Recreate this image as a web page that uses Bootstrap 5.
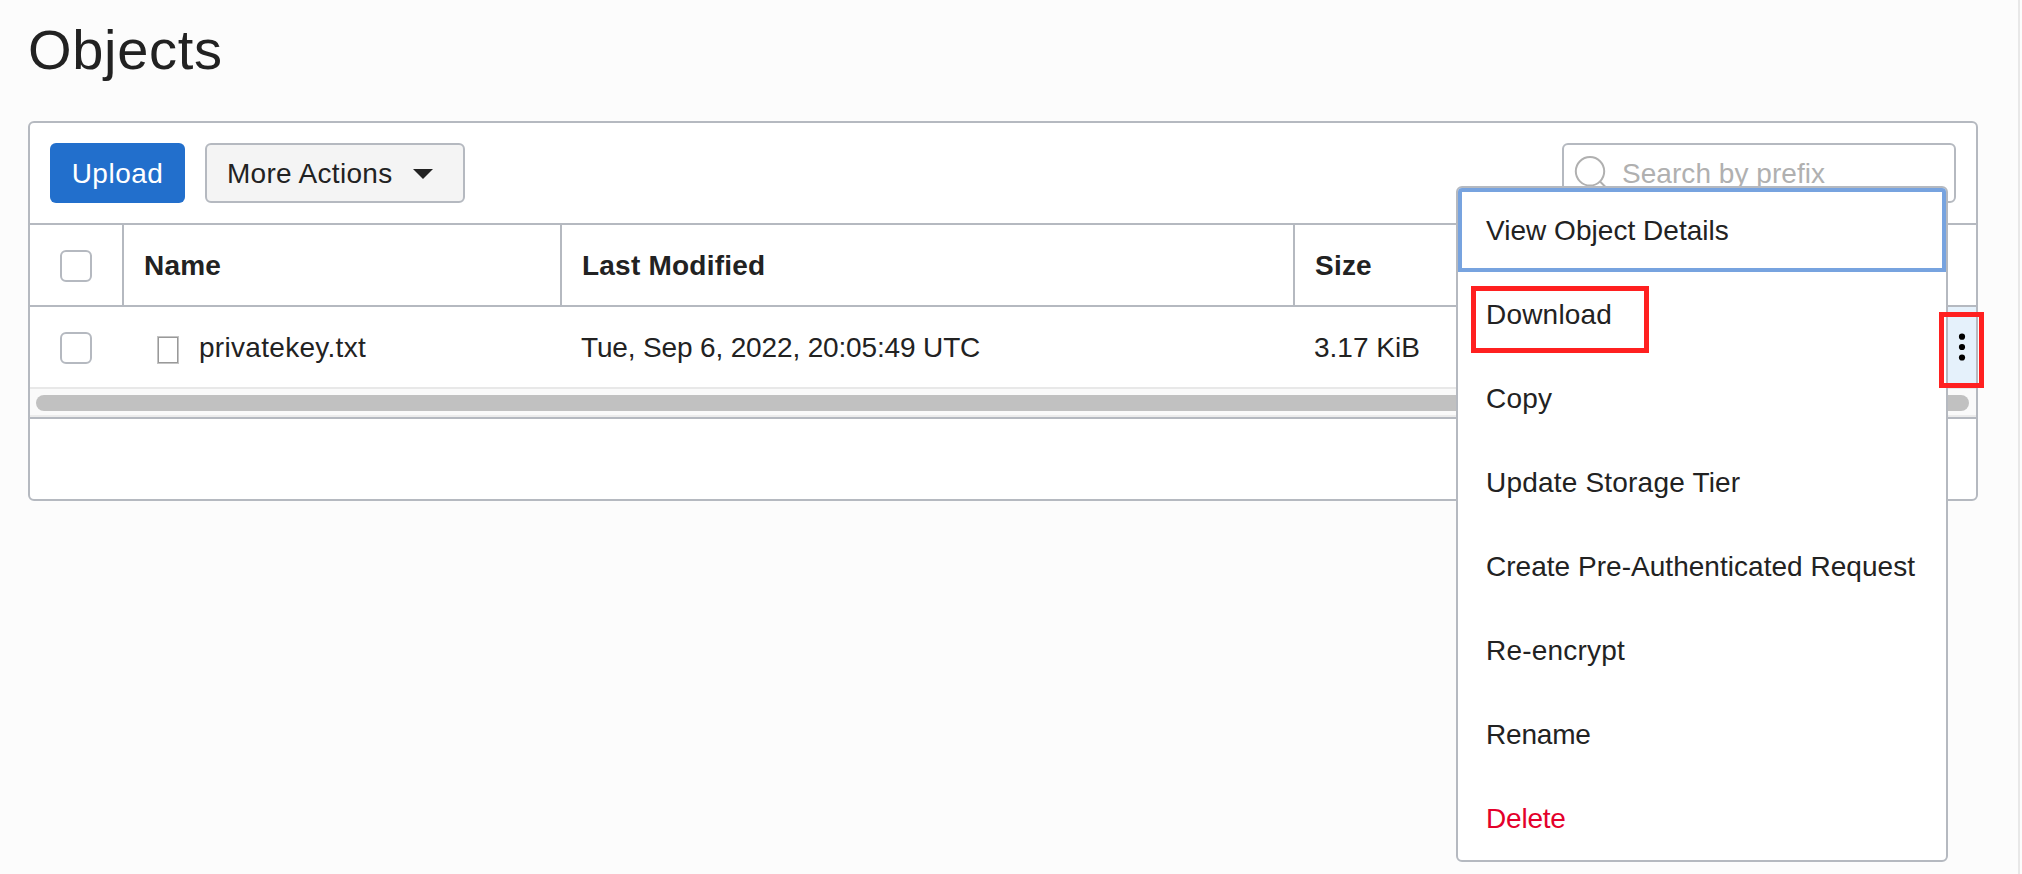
<!DOCTYPE html>
<html lang="en">
<head>
<meta charset="utf-8">
<title>Objects</title>
<link href="https://cdn.jsdelivr.net/npm/bootstrap@5.3.0/dist/css/bootstrap.min.css" rel="stylesheet">
<style>
:root { --line: #b5b9c0; }
html, body { height: 100%; }
body { font-family: "Liberation Sans", Arial, sans-serif; font-size: 28px; line-height: 32px; color: #222; background: #fcfcfc; overflow: hidden; }
.page-pane { width: 2020px; height: 874px; border-right: 2px solid #e8e8e8; padding: 18px 40px 0 28px; }
.page-title { font-size: 56px; line-height: 64px; letter-spacing: .7px; margin: 0 0 39px; font-weight: 400; }
.objects-panel { height: 380px; border: 2px solid var(--line); border-radius: 6px; background: #fff; }
.toolbar { height: 100px; padding: 0 20px; }
.toolbar .btn { height: 60px; font-size: 28px; line-height: 32px; border-radius: 6px; padding: 2px 0 0; }
.toolbar .btn-upload { width: 135px; background: #226fcc; color: #fff; letter-spacing: .5px; }
.toolbar .btn-more { width: 260px; background: #f4f4f4; border: 2px solid var(--line); color: #222; letter-spacing: .3px; margin-left: 20px; padding: 2px 30px 0 20px; }
.search-box { width: 394px; height: 60px; border: 2px solid var(--line); border-radius: 6px; padding-left: 9px; }
.search-box input.form-control { font-size: 28px; line-height: 32px; letter-spacing: .05px; padding: 2px 0 0; margin-left: 13px; }
.search-box input::placeholder { color: #b0b0b0; opacity: 1; }
.objects-table { table-layout: fixed; border-collapse: separate; border-spacing: 0; width: 1946px; margin: 0; color: #222; }
.objects-table th { height: 84px; border-top: 2px solid var(--line); border-bottom: 2px solid var(--line); border-right: 2px solid var(--line); padding: 2px 0 0 20px; vertical-align: middle; letter-spacing: .22px; }
.objects-table th:last-child { border-right: 0; }
.objects-table td { height: 82px; border-bottom: 2px solid #e8e8e8; padding: 2px 0 0 20px; vertical-align: middle; }
.objects-table td.stamp { padding-left: 19px; letter-spacing: -.15px; }
.objects-table td.amount { padding-left: 19px; }
.objects-table .pick { padding: 2px 0 0 30px; }
.objects-table .kebab { background: #e5f1fb; padding: 0 8px 0 0; }
.kebab circle { fill: #000; }
.pick .form-check-input { width: 32px; height: 32px; margin: 0; border: 2px solid var(--line); border-radius: 6px; background: #fff; display: block; }
.file-name { letter-spacing: .3px; }
.file-icon { width: 22px; height: 28px; margin: 3px 20px 0 13px; border: 1px solid #c4c4c4; box-shadow: inset 0 0 0 1px #999; }
.scroll-track { height: 28px; background: #fafafa; border-bottom: 2px solid #ececec; padding: 6px 7px 0 6px; }
.scroll-thumb { height: 16px; border-radius: 8px; background: #c1c1c1; }
.panel-foot { border-top: 2px solid var(--line); }
.row-menu { left: 1456px; top: 186px; width: 492px; height: 676px; padding: 0; border: 2px solid var(--line); border-radius: 6px; font-size: 28px; color: #222; overflow: hidden; background: #fff; }
.row-menu .dropdown-item { height: 84px; padding: 1px 0 0 28px; line-height: 84px; color: #222; letter-spacing: .03px; }
.row-menu .loose { letter-spacing: .2px; }
.row-menu .tight { letter-spacing: -.2px; }
.row-menu .focused { box-shadow: inset 0 0 0 4px #77a3df; }
.row-menu .danger-item { color: #e4002b; }
.callout-frame { border: 5px solid #ff2020; z-index: 1100; pointer-events: none; }
.frame-download { left: 1471px; top: 286px; width: 178px; height: 67px; }
.frame-kebab { left: 1939px; top: 312px; width: 45px; height: 76px; }
</style>
</head>
<body>
<main class="page-pane">
  <h1 class="page-title">Objects</h1>
  <section class="objects-panel d-flex flex-column">
    <div class="toolbar d-flex align-items-center flex-shrink-0">
      <button class="btn btn-upload border-0" type="button">Upload</button>
      <button class="btn btn-more d-flex align-items-center justify-content-between" type="button">
        <span>More Actions</span>
        <svg width="20" height="10" viewBox="0 0 20 10"><path d="M0 0h20L10 10z" fill="#222"/></svg>
      </button>
      <div class="search-box d-flex align-items-center ms-auto">
        <svg class="flex-shrink-0" width="36" height="36" viewBox="0 0 36 36" fill="none" stroke="#b0b0b0" stroke-width="2"><circle cx="17" cy="16.300" r="14.200"/><path d="M27 26.500l7 7"/></svg>
        <input class="form-control border-0 shadow-none bg-transparent" type="text" placeholder="Search by prefix">
      </div>
    </div>
    <table class="objects-table">
      <colgroup><col style="width:94px"><col style="width:438px"><col style="width:733px"><col></colgroup>
      <thead>
        <tr><th class="pick"><input class="form-check-input" type="checkbox" aria-label="Select all"></th><th>Name</th><th>Last Modified</th><th colspan="2">Size</th></tr>
      </thead>
      <tbody>
        <tr>
          <td class="pick"><input class="form-check-input" type="checkbox" aria-label="Select privatekey.txt"></td>
          <td><div class="d-flex align-items-center"><span class="file-icon"></span><span class="file-name">privatekey.txt</span></div></td>
          <td class="stamp">Tue, Sep 6, 2022, 20:05:49 UTC</td>
          <td class="amount">3.17 KiB</td>
          <td class="kebab"><svg class="d-block ms-auto" width="12" height="28" viewBox="0 0 12 28"><circle cx="6" cy="3.700" r="3.100"/><circle cx="6" cy="14" r="3.100"/><circle cx="6" cy="24.500" r="3.100"/></svg></td>
        </tr>
      </tbody>
    </table>
    <div class="scroll-track flex-shrink-0"><div class="scroll-thumb"></div></div>
    <div class="panel-foot flex-grow-1"></div>
  </section>
</main>
<div class="dropdown-menu show row-menu position-absolute">
  <a class="dropdown-item focused">View Object Details</a>
  <a class="dropdown-item loose">Download</a>
  <a class="dropdown-item loose">Copy</a>
  <a class="dropdown-item loose">Update Storage Tier</a>
  <a class="dropdown-item">Create Pre-Authenticated Request</a>
  <a class="dropdown-item loose">Re-encrypt</a>
  <a class="dropdown-item tight">Rename</a>
  <a class="dropdown-item danger-item tight">Delete</a>
</div>
<div class="callout-frame frame-download position-absolute"></div>
<div class="callout-frame frame-kebab position-absolute"></div>
<script src="https://cdn.jsdelivr.net/npm/bootstrap@5.3.0/dist/js/bootstrap.bundle.min.js"></script>
</body>
</html>
